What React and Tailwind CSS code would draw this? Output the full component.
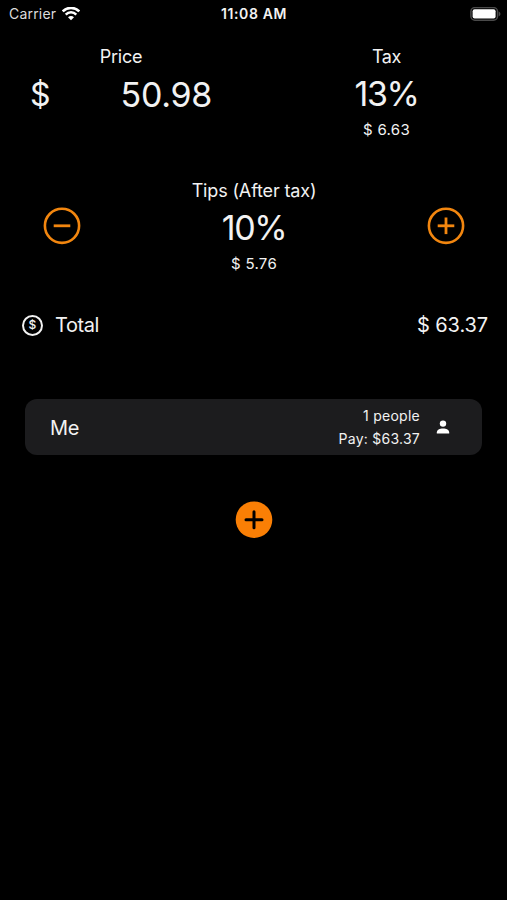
import { useState } from "react";

const PRICE = 50.98;
const TAX_RATE = 13;

const money = (value) => value.toFixed(2);

function WifiIcon() {
  return (
    <svg viewBox="0 0 18 14" className="h-[14px] w-[18px]" fill="none" stroke="#fff">
      <path d="M0.7 4.4C5.4 -0.2 12.6 -0.2 17.3 4.4" strokeWidth="2.7" />
      <path d="M3.7 7.6C6.7 4.6 11.3 4.6 14.3 7.6" strokeWidth="2.5" />
      <path d="M9 13.3L6 10.3C7.7 8.7 10.3 8.7 12 10.3Z" fill="#fff" stroke="none" />
    </svg>
  );
}

function BatteryIcon() {
  return (
    <svg viewBox="0 0 31 15" className="h-[15px] w-[31px]">
      <rect x="0.9" y="0.6" width="26.6" height="12.6" rx="4" fill="none" stroke="#4a4a4a" strokeWidth="1.5" />
      <rect x="2.6" y="2.3" width="23" height="9.2" rx="2" fill="#fff" />
      <path d="M28.7 4.5C31 5.2 31 8.6 28.7 9.3Z" fill="#4a4a4a" />
    </svg>
  );
}

function CircleIcon({ plus = false }) {
  return (
    <svg viewBox="0 0 38 38" className="h-[38px] w-[38px]" fill="none" stroke="#f2860f">
      <circle cx="19" cy="18.8" r="17.1" strokeWidth="2.6" />
      <path d="M10.7 18.8H27.3" strokeWidth="2.8" />
      {plus && <path d="M19 10.5V27.1" strokeWidth="2.8" />}
    </svg>
  );
}

function PersonIcon() {
  return (
    <svg viewBox="0 0 14 14" className="h-[14px] w-[14px]" fill="#fff">
      <circle cx="7" cy="3.6" r="3.2" />
      <path d="M0.8 13.6V12.5C0.8 9.8 3.6 8.4 7 8.4S13.2 9.8 13.2 12.5V13.6Z" />
    </svg>
  );
}

export default function App() {
  const [tipRate, setTipRate] = useState(10);

  const tax = (PRICE * TAX_RATE) / 100;
  const tip = ((PRICE + tax) * tipRate) / 100;
  const total = PRICE + tax + tip;

  return (
    <div className="flex h-[900px] w-[507px] flex-col overflow-hidden bg-black font-['Inter',sans-serif] text-[#f2f2f2]">
      {/* Status bar */}
      <header className="grid h-7 grid-cols-3 items-center pl-[7px] pr-[6px] text-sm">
        <div className="flex items-center gap-1.5 pl-[2px] text-[#dcdcdc]">
          <span className="tracking-[0.2px]">Carrier</span>
          <WifiIcon />
        </div>
        <span className="text-center font-semibold tracking-[0.6px]">11:08 AM</span>
        <div className="flex justify-end">
          <BatteryIcon />
        </div>
      </header>

      {/* Price and tax */}
      <section className="mt-4 flex">
        <div className="ml-[30px] w-[182px]">
          <div className="pt-px text-center text-lg leading-6 tracking-[-0.2px]">Price</div>
          <div className="flex h-[51px] items-center justify-between text-[34px] tracking-[-0.3px]">
            <span className="text-[32px]">$</span>
            <span>50.98</span>
          </div>
        </div>
        <div className="ml-auto w-[241px] text-center">
          <div className="pt-px text-lg leading-6 tracking-[-0.4px]">Tax</div>
          <div className="mb-0.5 text-[34px] leading-[49px] tracking-[-1.4px]">{TAX_RATE}%</div>
          <div className="text-[15px] leading-5 tracking-[0.3px]">$ {money(tax)}</div>
        </div>
      </section>

      {/* Tips */}
      <section className="mt-[38px] flex items-center justify-between pl-[43px] pr-[42px]">
        <button type="button" aria-label="Lower tip" onClick={() => setTipRate(Math.max(0, tipRate - 1))}>
          <CircleIcon />
        </button>
        <div className="text-center">
          <div className="pt-px text-lg leading-6 tracking-[-0.15px]">Tips (After tax)</div>
          <div className="mb-0.5 text-[34px] leading-[49px] tracking-[-1.4px]">{tipRate}%</div>
          <div className="text-[15px] leading-5 tracking-[0.3px]">$ {money(tip)}</div>
        </div>
        <button type="button" aria-label="Raise tip" onClick={() => setTipRate(tipRate + 1)}>
          <CircleIcon plus />
        </button>
      </section>

      {/* Total */}
      <section className="mt-[31px] flex h-10 items-center pl-[22px] pr-[19px] text-xl">
        <span className="flex h-[21px] w-[21px] items-center justify-center rounded-full border-2 border-[#f2f2f2] text-xs font-medium leading-none">
          $
        </span>
        <span className="ml-3 tracking-[-0.4px]">Total</span>
        <span className="ml-auto tracking-[-0.1px]">$ {money(total)}</span>
      </section>

      {/* People */}
      <section className="mx-[25px] mt-[54px] flex h-14 items-center rounded-xl bg-[#1c1c1e] pl-[25px] pr-[32px]">
        <span className="pt-px text-xl tracking-[-0.4px]">Me</span>
        <div className="ml-auto text-right text-sm leading-[23px] tracking-[0.25px]">
          <div>1 people</div>
          <div>Pay: ${money(total)}</div>
        </div>
        <div className="ml-4">
          <PersonIcon />
        </div>
      </section>

      <button type="button" aria-label="Add person" className="mx-auto mt-[46px]">
        <svg viewBox="0 0 38 38" className="h-[38px] w-[38px]">
          <circle cx="19" cy="18.7" r="18.3" fill="#fa7f05" />
          <path d="M11 18.7H27M19 10.7V26.7" stroke="#000" strokeWidth="3" strokeLinecap="round" />
        </svg>
      </button>
    </div>
  );
}
